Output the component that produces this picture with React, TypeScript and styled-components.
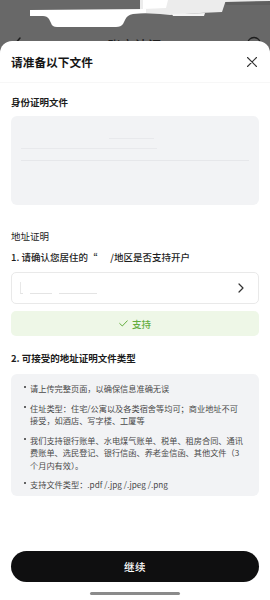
import React from "react";
import styled, { createGlobalStyle } from "styled-components";

const GlobalStyle = createGlobalStyle`
  html, body {
    margin: 0;
    padding: 0;
    background: #686868;
  }
  body {
    font-family: "Noto Sans CJK SC", "Noto Sans", sans-serif;
    -webkit-font-smoothing: antialiased;
  }
  * { box-sizing: border-box; }
`;

const Page = styled.div`
  position: relative;
  width: 270px;
  height: 600px;
  overflow: hidden;
  background: #686868;
`;

const StatusBar = styled.div`
  height: 30px;
  display: block;
  svg { display: block; }
`;

const NavBar = styled.div`
  height: 28px;
  display: flex;
  align-items: center;
  justify-content: space-between;
  padding: 0 8px 0 13px;
`;

const NavTitle = styled.div`
  font-size: 13px;
  font-weight: 500;
  color: #1e1e1e;
  letter-spacing: 0.5px;
`;

const Sheet = styled.div`
  position: absolute;
  top: 41px;
  left: 0;
  right: 0;
  bottom: 0;
  background: #ffffff;
  border-radius: 12px 12px 0 0;
  display: flex;
  flex-direction: column;
`;

const SheetHeader = styled.div`
  height: 42px;
  flex: none;
  display: flex;
  align-items: center;
  justify-content: space-between;
  padding: 0 11px;
  border-bottom: 1px solid #f7f7f7;
`;

const SheetTitle = styled.div`
  font-size: 11.7px;
  font-weight: 700;
  color: #151515;
  line-height: 16px;
`;

const CloseButton = styled.div`
  width: 12px;
  height: 12px;
  display: flex;
  align-items: center;
  justify-content: center;
  margin-right: 1px;
`;

const Content = styled.div`
  flex: 1;
  padding: 0 11px;
  display: flex;
  flex-direction: column;
`;

const SectionTitle = styled.div<{ $top: number; $weight?: number }>`
  margin-top: ${(p) => p.$top}px;
  font-size: 9.5px;
  line-height: 14px;
  font-weight: ${(p) => p.$weight ?? 500};
  color: #1c1c1c;
  white-space: nowrap;
`;

const IdBox = styled.div`
  margin-top: 7px;
  height: 89px;
  background: #f2f3f5;
  border-radius: 6px;
  padding: 0 10px;
  display: flex;
  flex-direction: column;
`;

const FaintLine = styled.div<{ $w: number; $ml: number; $mt: number }>`
  height: 1px;
  width: ${(p) => p.$w}px;
  margin-left: ${(p) => p.$ml}px;
  margin-top: ${(p) => p.$mt}px;
  background: #e8e9ec;
`;

const IdDivider = styled.div`
  margin-top: 11px;
  height: 1px;
  background: #e6e7ea;
`;

const SelectRow = styled.div`
  margin-top: 8px;
  height: 32px;
  border: 1px solid #e9e9e9;
  border-radius: 5px;
  background: #fff;
  display: flex;
  align-items: center;
  justify-content: space-between;
  padding: 0 14px 0 8px;
`;

const Redacted = styled.div`
  display: flex;
  align-items: flex-end;
  gap: 7px;
  height: 12px;
`;

const RedactMark = styled.span<{ $w: number; $h: number }>`
  display: block;
  width: ${(p) => p.$w}px;
  height: ${(p) => p.$h}px;
  border-bottom: 1px solid #e4e4e4;
  border-left: ${(p) => (p.$h > 4 ? "1px solid #e8e8e8" : "none")};
`;

const SupportBadge = styled.div`
  margin-top: 7px;
  height: 25px;
  border-radius: 5px;
  background: #eef7e7;
  display: flex;
  align-items: center;
  justify-content: center;
  gap: 4px;
  color: #63ad3d;
  font-size: 9.5px;
  font-weight: 500;
`;

const ListBox = styled.ul`
  margin: 9px 0 0;
  padding: 8px 15px 5px 19px;
  list-style: none;
  background: #f2f3f5;
  border-radius: 6px;
  display: flex;
  flex-direction: column;
  gap: 7px;
`;

const ListItem = styled.li`
  position: relative;
  font-size: 8.2px;
  line-height: 12.5px;
  color: #4a4a4a;
  &::before {
    content: "";
    position: absolute;
    left: -6px;
    top: 4px;
    width: 2px;
    height: 2px;
    border-radius: 1px;
    background: #333;
  }
`;

const Footer = styled.div`
  flex: none;
  padding: 0 11px 5px;
  display: flex;
  flex-direction: column;
  align-items: center;
`;

const PrimaryButton = styled.button`
  width: 100%;
  height: 31px;
  border: none;
  border-radius: 16px;
  background: #0f0f10;
  color: #ffffff;
  font-family: inherit;
  font-size: 10.5px;
  font-weight: 500;
  letter-spacing: 0.5px;
`;

const HomeIndicator = styled.div`
  margin-top: 10px;
  width: 90px;
  height: 3px;
  border-radius: 2px;
  background: #8a8a8a;
`;

export default function App() {
  return (
    <>
      <GlobalStyle />
      <Page>
        <StatusBar>
          <svg width="270" height="30" viewBox="0 0 270 30">
            <path d="M140 0 L270 0 L270 2 L225 3 L222 12 L200 13 L170 15 L160 14 L140 13 Z" fill="#ececec" />
            <path d="M143 0 L168 0 L166 8 L143 9 Z" fill="#ffffff" />
            <path d="M225 2 L270 1 L270 5 L226 5 Z" fill="#5f5f5f" />
            <path d="M30 10 L146 9 L146 13 L133 14 Q127 15 125 20 L123 24 Q121 27 116 27 L57 27 Q52 27 51 23 L49 19 Q47 16 43 16 L30 16 Z" fill="#ffffff" />
            <path d="M172 14 L205 13 L204 16 L173 16 Z" fill="#f4f4f4" />
          </svg>
        </StatusBar>
        <NavBar>
          <svg width="10" height="16" viewBox="0 0 10 16">
            <path d="M7 2 L2 8 L7 14" fill="none" stroke="#1e1e1e" strokeWidth="1.5" strokeLinecap="round" strokeLinejoin="round" />
          </svg>
          <NavTitle>账户认证</NavTitle>
          <svg width="16" height="16" viewBox="0 0 16 16">
            <circle cx="8" cy="8" r="6.5" fill="none" stroke="#1e1e1e" strokeWidth="1.3" />
          </svg>
        </NavBar>
        <Sheet>
          <SheetHeader>
            <SheetTitle>请准备以下文件</SheetTitle>
            <CloseButton>
              <svg width="10" height="10" viewBox="0 0 10 10">
                <path d="M0.5 0.5 L9.5 9.5 M9.5 0.5 L0.5 9.5" stroke="#333" strokeWidth="1.1" strokeLinecap="round" />
              </svg>
            </CloseButton>
          </SheetHeader>
          <Content>
            <SectionTitle $top={12} $weight={600}>身份证明文件</SectionTitle>
            <IdBox>
              <FaintLine $w={45} $ml={88} $mt={22} />
              <FaintLine $w={136} $ml={0} $mt={9} />
              <IdDivider />
            </IdBox>
            <SectionTitle $top={24} $weight={400}>地址证明</SectionTitle>
            <SectionTitle $top={7} $weight={500}>1. 请确认您居住的“&nbsp;&nbsp;&nbsp;&nbsp;&nbsp;&nbsp;/地区是否支持开户</SectionTitle>
            <SelectRow>
              <Redacted>
                <RedactMark $w={3} $h={12} />
                <RedactMark $w={22} $h={2} />
                <RedactMark $w={38} $h={2} />
              </Redacted>
              <svg width="6" height="10" viewBox="0 0 6 10">
                <path d="M1 1 L5 5 L1 9" fill="none" stroke="#333" strokeWidth="1.2" strokeLinecap="round" strokeLinejoin="round" />
              </svg>
            </SelectRow>
            <SupportBadge>
              <svg width="9" height="7" viewBox="0 0 9 7">
                <path d="M0.7 3.5 L3.3 6 L8.3 0.8" fill="none" stroke="#63ad3d" strokeWidth="1" strokeLinecap="round" strokeLinejoin="round" />
              </svg>
              <span>支持</span>
            </SupportBadge>
            <SectionTitle $top={15} $weight={600}>2. 可接受的地址证明文件类型</SectionTitle>
            <ListBox>
              <ListItem>请上传完整页面，以确保信息准确无误</ListItem>
              <ListItem>住址类型：住宅/公寓以及各类宿舍等均可；商业地址不可接受，如酒店、写字楼、工厦等</ListItem>
              <ListItem>我们支持银行账单、水电煤气账单、税单、租房合同、通讯费账单、选民登记、银行信函、养老金信函、其他文件（3个月内有效）。</ListItem>
              <ListItem>支持文件类型：.pdf /.jpg /.jpeg /.png</ListItem>
            </ListBox>
          </Content>
          <Footer>
            <PrimaryButton>继续</PrimaryButton>
            <HomeIndicator />
          </Footer>
        </Sheet>
      </Page>
    </>
  );
}
